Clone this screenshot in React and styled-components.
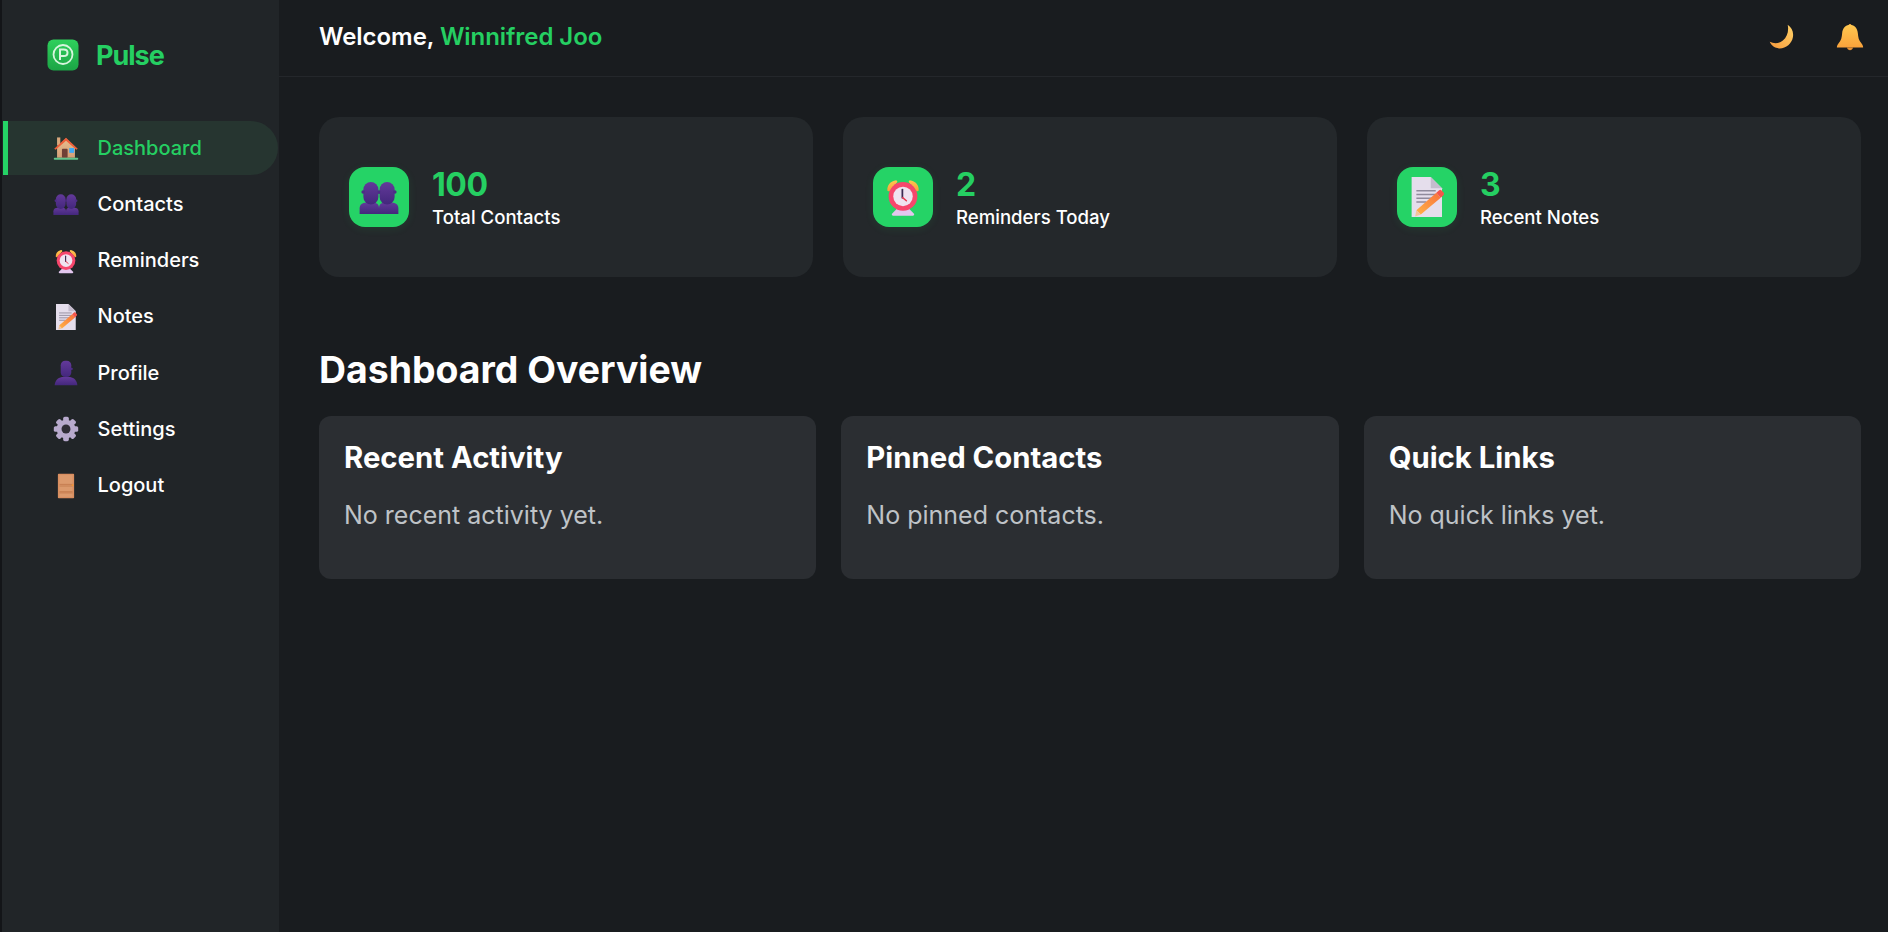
import React from "react";
import styled, { createGlobalStyle } from "styled-components";

const GlobalStyle = createGlobalStyle`
  html, body {
    margin: 0;
    height: 100%;
    background: #191c1f;
  }
  #root {
    height: 100%;
  }
  * {
    box-sizing: border-box;
  }
  body {
    font-family: Inter, "Noto Sans", sans-serif;
    color: #fff;
    overflow: hidden;
  }
`;

function Gradients() {
  return (
    <HiddenSvg aria-hidden="true">
      <defs>
        <linearGradient id="purple" x1="0" y1="0" x2="0" y2="1">
          <stop offset="0" stopColor="#63399a" />
          <stop offset="1" stopColor="#43277c" />
        </linearGradient>
        <linearGradient id="amber" x1="0" y1="0" x2="0" y2="1">
          <stop offset="0" stopColor="#ffc850" />
          <stop offset="1" stopColor="#f9a23b" />
        </linearGradient>
        <linearGradient id="moon" x1="1" y1="0" x2="0" y2="1">
          <stop offset="0" stopColor="#ffd268" />
          <stop offset="1" stopColor="#f79a3c" />
        </linearGradient>
        <linearGradient id="logo" x1="0" y1="0" x2="0" y2="1">
          <stop offset="0" stopColor="#2fd05c" />
          <stop offset="1" stopColor="#1ba445" />
        </linearGradient>
        <linearGradient id="pencil" x1="0" y1="1" x2="1" y2="0">
          <stop offset="0" stopColor="#ffb347" />
          <stop offset="1" stopColor="#f9713c" />
        </linearGradient>
        <linearGradient id="wall" x1="0" y1="0" x2="0" y2="1">
          <stop offset="0" stopColor="#e8bd8d" />
          <stop offset="1" stopColor="#d49f78" />
        </linearGradient>
      </defs>
    </HiddenSvg>
  );
}

const House = () => (
  <>
    <rect x="5" y="3" width="4" height="10" fill="#d8a77c" />
    <path d="M5 15 16 4l11 11v13H5z" fill="url(#wall)" />
    <path d="M1.5 17 16 3.500 30.500 17l-1.800 1.200L16 7.200 3.300 18.200z" fill="#ee5f3a" />
    <rect x="11" y="17" width="7" height="11" rx="1" fill="#6f4036" />
    <rect x="20" y="16" width="6" height="6" fill="#3fa9f5" />
    <rect x="1" y="28" width="30" height="2.500" rx="1" fill="#63c58c" />
  </>
);

const People = () => (
  <>
    <path d="M0.500 29.500v-4.500c0-3.300 2.500-4.500 5-4.500h6c3 0 4.500 1.500 4.500 4v5z" fill="url(#purple)" />
    <rect x="3.500" y="4" width="12" height="18" rx="6" fill="url(#purple)" />
    <circle cx="3.300" cy="12" r="1.400" fill="#4c2c85" />
    <path d="M31.500 29.500v-4.500c0-3.300-2.500-4.500-5-4.500h-6c-3 0-4.500 1.500-4.500 4v5z" fill="url(#purple)" />
    <rect x="16.500" y="4" width="12" height="18" rx="6" fill="url(#purple)" />
    <circle cx="28.700" cy="12" r="1.400" fill="#4c2c85" />
    <rect x="15" y="10.500" width="2" height="3" rx="1" fill="#4c2c85" />
  </>
);

const Clock = () => (
  <>
    <path d="M3.500 11C3 6.500 6 3 10.500 2.500 11 2.800 11.500 3.500 11.500 4L5 11.500z" fill="url(#amber)" />
    <path d="M28.500 11C29 6.500 26 3 21.500 2.500 21 2.800 20.500 3.500 20.500 4L27 11.500z" fill="url(#amber)" />
    <path d="M12.500 24h7l5.500 5.500c0 1-.7 1.500-2 1.500H9c-1.300 0-2-.5-2-1.500z" fill="#e3c7ee" />
    <circle cx="16" cy="15.500" r="11.500" fill="#f6466c" />
    <circle cx="16" cy="15.500" r="7.800" fill="#efe3f0" />
    <path d="M15.500 10v6.500" stroke="#3b2b52" strokeWidth="1.400" strokeLinecap="round" />
    <path d="M15.700 16.500l3 2.500" stroke="#e8394f" strokeWidth="1.200" strokeLinecap="round" />
  </>
);

const Note = () => (
  <>
    <path d="M3.700 0h15.300l9 9v23H3.700z" fill="#e5deec" />
    <path d="M19 0l9 9h-9z" fill="#c4bccd" />
    <path d="M7.500 11h15.500M7.500 14h15.500M7.500 17h15.500M7.500 20h8" stroke="#908a9c" strokeWidth="1.100" />
    <path d="M7.500 26.500 23.500 12.500 27 16.500 11 30z" fill="url(#pencil)" />
    <path d="M23.500 12.500l2-1.800c.7-.6 1.500-.6 2.200 0l1.500 1.600c.6.700.5 1.500-.1 2.200L27 16.500z" fill="#f4544a" />
    <path d="M7.500 26.500 11 30l-4.500 1.500z" fill="#f3c59a" />
  </>
);

const Person = () => (
  <>
    <path d="M2 31c.5-5 3.500-9 9-10h10c5.500 1 8.500 5 9 10z" fill="url(#purple)" />
    <rect x="9.500" y="1" width="13" height="20" rx="5.500" fill="url(#purple)" />
    <circle cx="23" cy="11" r="1.400" fill="#4c2c85" />
  </>
);

const Gear = () => (
  <>
    <g fill="#b8aacd">
      {[0, 45, 90, 135, 180, 225, 270, 315].map((angle) => (
        <rect key={angle} x="12.500" y="1" width="7" height="8" rx="2" transform={`rotate(${angle} 16 16)`} />
      ))}
      <circle cx="16" cy="16" r="11.500" />
    </g>
    <circle cx="16" cy="16" r="5.500" fill="#2f2d36" />
  </>
);

const Door = () => (
  <>
    <rect x="6" y="1" width="20" height="30" rx="1" fill="#d98e60" />
    <rect x="8" y="2.500" width="16" height="27" fill="#dc9a6d" />
    <path d="M8 14h16M8 16h16M8 23h16M8 24.500h16" stroke="#bb6f43" strokeWidth="0.800" />
    <rect x="23" y="14" width="2" height="2" fill="#f2962e" />
  </>
);

const Moon = () => (
  <path
    d="M22.500 2C27 5 29.500 10 28.500 16c-1.300 8-8.500 13.500-16 13-4.500-.3-8.500-3-10.500-7.500 5 2.500 11 2 15-1.500 5-4 7-11 5.500-18z"
    fill="url(#moon)"
  />
);

const Bell = () => (
  <>
    <circle cx="16" cy="2.500" r="1.500" fill="#f2a53e" />
    <path d="M16 2c5.500 0 8.500 4 9 10 .3 4 1 8 4 11 1.200 1.300 2 3 2 5H1c0-2 .8-3.700 2-5 3-3 3.700-7 4-11 .5-6 3.500-10 9-10z" fill="url(#amber)" />
    <path d="M12.500 28h7c-.5 2-2 3-3.500 3s-3-1-3.500-3z" fill="#e58f32" />
  </>
);

const LogoMark = () => (
  <>
    <rect x="0.500" y="0.500" width="31" height="31" rx="6" fill="url(#logo)" />
    <circle cx="16" cy="15.500" r="9.500" fill="none" stroke="#d6f5dd" strokeWidth="1.800" />
    <path
      d="M13 21V10.500h3.700c2.300 0 3.800 1.300 3.800 3.300s-1.500 3.300-3.800 3.300H13"
      fill="none"
      stroke="#d6f5dd"
      strokeWidth="2"
    />
  </>
);

function Emoji({ size, children }) {
  return (
    <EmojiSvg viewBox="0 0 32 32" $size={size}>
      {children}
    </EmojiSvg>
  );
}

const navItems = [
  { label: "Dashboard", icon: <House />, active: true },
  { label: "Contacts", icon: <People /> },
  { label: "Reminders", icon: <Clock /> },
  { label: "Notes", icon: <Note /> },
  { label: "Profile", icon: <Person /> },
  { label: "Settings", icon: <Gear /> },
  { label: "Logout", icon: <Door /> },
];

const stats = [
  { value: "100", label: "Total Contacts", icon: <People /> },
  { value: "2", label: "Reminders Today", icon: <Clock /> },
  { value: "3", label: "Recent Notes", icon: <Note /> },
];

const panels = [
  { title: "Recent Activity", text: "No recent activity yet." },
  { title: "Pinned Contacts", text: "No pinned contacts." },
  { title: "Quick Links", text: "No quick links yet." },
];

export default function App() {
  return (
    <Shell>
      <GlobalStyle />
      <Gradients />
      <Sidebar>
        <Brand>
          <Emoji size={32}>
            <LogoMark />
          </Emoji>
          <BrandName>Pulse</BrandName>
        </Brand>
        <Nav>
          {navItems.map((item) => (
            <NavItem key={item.label} $active={item.active}>
              <Emoji size={26}>{item.icon}</Emoji>
              <NavLabel>{item.label}</NavLabel>
            </NavItem>
          ))}
        </Nav>
      </Sidebar>
      <Main>
        <TopBar>
          <Welcome>
            Welcome, <Name>Winnifred Joo</Name>
          </Welcome>
          <TopActions>
            <Emoji size={28}>
              <Moon />
            </Emoji>
            <Emoji size={28}>
              <Bell />
            </Emoji>
          </TopActions>
        </TopBar>
        <Content>
          <StatRow>
            {stats.map((stat) => (
              <StatCard key={stat.label}>
                <StatIcon>
                  <Emoji size={40}>{stat.icon}</Emoji>
                </StatIcon>
                <div>
                  <StatValue>{stat.value}</StatValue>
                  <StatLabel>{stat.label}</StatLabel>
                </div>
              </StatCard>
            ))}
          </StatRow>
          <Heading>Dashboard Overview</Heading>
          <PanelRow>
            {panels.map((panel) => (
              <Panel key={panel.title}>
                <PanelTitle>{panel.title}</PanelTitle>
                <PanelText>{panel.text}</PanelText>
              </Panel>
            ))}
          </PanelRow>
        </Content>
      </Main>
    </Shell>
  );
}

const HiddenSvg = styled.svg`
  position: absolute;
  width: 0;
  height: 0;
`;

const EmojiSvg = styled.svg`
  width: ${(p) => p.$size}px;
  height: ${(p) => p.$size}px;
  flex-shrink: 0;
  display: block;
`;

const Shell = styled.div`
  display: flex;
  height: 100%;
  border-left: 2px solid #131518;
`;

const Sidebar = styled.aside`
  width: 277px;
  flex-shrink: 0;
  background: #212528;
  padding-top: 39px;
`;

const Brand = styled.div`
  display: flex;
  align-items: center;
  gap: 17px;
  padding-left: 45px;
  height: 32px;
`;

const BrandName = styled.span`
  font-size: 27px;
  font-weight: 700;
  letter-spacing: -1px;
  color: #25cf62;
`;

const Nav = styled.nav`
  display: flex;
  flex-direction: column;
  gap: 2.3px;
  margin-top: 50px;
  margin-left: 1px;
  margin-right: 1px;
`;

const NavItem = styled.div`
  display: flex;
  align-items: center;
  gap: 18.500px;
  height: 54px;
  padding-left: ${(p) => (p.$active ? "45px" : "50px")};
  border-left: ${(p) => (p.$active ? "5px solid #25d366" : "none")};
  border-radius: 0 27px 27px 0;
  background: ${(p) => (p.$active ? "#263530" : "transparent")};
  color: ${(p) => (p.$active ? "#25cf62" : "#fff")};
  font-size: 20px;
  font-weight: 500;
`;

const NavLabel = styled.span`
  margin-bottom: 1px;
`;

const Main = styled.main`
  flex: 1;
  min-width: 0;
`;

const TopBar = styled.header`
  display: flex;
  align-items: center;
  justify-content: space-between;
  height: 77px;
  padding: 0 24px 2px 40px;
  border-bottom: 1px solid #24272b;
`;

const Welcome = styled.div`
  margin-bottom: 2px;
  font-size: 24px;
  font-weight: 600;
  letter-spacing: -0.05px;
`;

const Name = styled.span`
  color: #25cf62;
`;

const TopActions = styled.div`
  display: flex;
  align-items: center;
  gap: 40px;
`;

const Content = styled.div`
  padding: 40px 27px 0 40px;
`;

const StatRow = styled.section`
  display: grid;
  grid-template-columns: repeat(3, 1fr);
  gap: 30px;
`;

const StatCard = styled.div`
  display: flex;
  align-items: center;
  gap: 23px;
  height: 160px;
  padding-left: 30px;
  background: #24282b;
  border-radius: 20px;
`;

const StatIcon = styled.div`
  display: flex;
  align-items: center;
  justify-content: center;
  width: 60px;
  height: 60px;
  border-radius: 16px;
  background: #25d366;
  box-shadow: 0 2px 8px rgba(37, 211, 102, 0.1);
`;

const StatValue = styled.div`
  font-size: 32px;
  font-weight: 700;
  line-height: 40px;
  letter-spacing: -0.5px;
  color: #25cf62;
`;

const StatLabel = styled.div`
  font-size: 18.600px;
  font-weight: 500;
  line-height: 24px;
`;

const Heading = styled.h2`
  margin: 71px 0 24px;
  font-size: 37.400px;
  font-weight: 700;
  line-height: 44px;
`;

const PanelRow = styled.section`
  display: grid;
  grid-template-columns: repeat(3, 1fr);
  gap: 25px;
`;

const Panel = styled.div`
  height: 163px;
  padding: 25px;
  background: #2b2e32;
  border-radius: 12px;
`;

const PanelTitle = styled.h3`
  margin: 0 0 25px;
  font-size: 29.300px;
  font-weight: 700;
  line-height: 34px;
`;

const PanelText = styled.p`
  margin: 0;
  font-size: 25px;
  line-height: 30px;
  color: #bfc3c7;
`;
